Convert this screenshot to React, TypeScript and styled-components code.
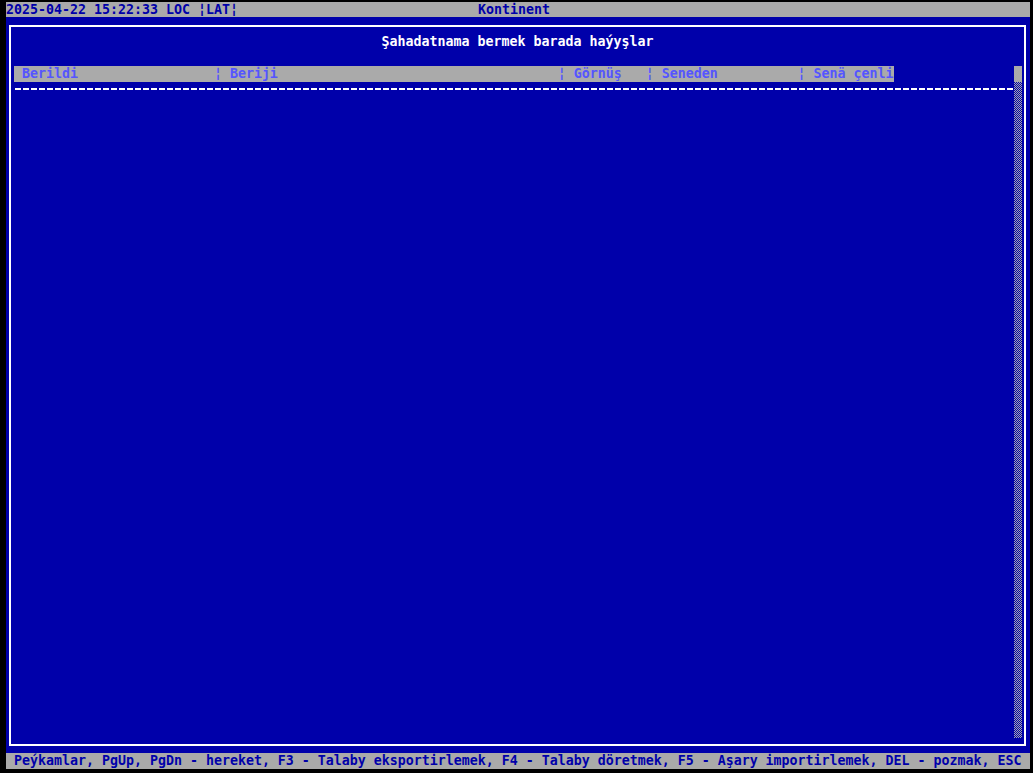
import React from "react";
import styled, { createGlobalStyle } from "styled-components";

const VGA_BLUE = "#0000AA";
const VGA_GRAY = "#AAAAAA";
const VGA_LIGHT_BLUE = "#5555FF";
const WHITE = "#FFFFFF";

const GlobalStyle = createGlobalStyle`
  html, body {
    margin: 0;
    padding: 0;
    background: #000;
    overflow: hidden;
  }
  body {
    font-family: "DejaVu Sans Mono", "Liberation Mono", monospace;
  }
`;

const Screen = styled.div`
  margin: 2px 0 0 6px;
  width: 1024px;
  height: 767px;
  display: flex;
  flex-direction: column;
  font-family: "DejaVu Sans Mono", "Liberation Mono", monospace;
  font-weight: bold;
  font-size: 13.29px;
  line-height: 16px;
  white-space: pre;
`;

const StatusBar = styled.div<{ $height: number }>`
  height: ${(p) => p.$height}px;
  line-height: ${(p) => p.$height}px;
  background: ${VGA_GRAY};
  color: ${VGA_BLUE};
  display: flex;
  align-items: center;
`;

const Clock = styled.span`
  width: 472px;
`;

const AppName = styled.span``;

const HelpText = styled.span`
  padding-left: 8px;
`;

const Desktop = styled.main`
  flex: 1;
  background: ${VGA_BLUE};
  padding: 8px 4px 7px 3px;
  display: flex;
  min-height: 0;
`;

const Frame = styled.section`
  flex: 1;
  border: 2px solid ${WHITE};
  display: flex;
  flex-direction: column;
  min-height: 0;
`;

const Title = styled.h1`
  margin: 7px 0 0;
  height: 16px;
  font: inherit;
  line-height: 16px;
  color: ${WHITE};
  text-align: center;
`;

const Body = styled.div`
  flex: 1;
  margin-top: 16px;
  padding: 0 2px 6px 3px;
  display: flex;
  min-height: 0;
`;

const Table = styled.div`
  flex: 1;
  display: flex;
  flex-direction: column;
`;

const HeaderRow = styled.div`
  width: 880px;
  height: 16px;
  background: ${VGA_GRAY};
  color: ${VGA_LIGHT_BLUE};
  overflow: hidden;
`;

const DashRow = styled.div`
  height: 16px;
  display: flex;
  flex-direction: column;
`;

const DashLine = styled.div`
  margin-top: 6px;
  height: 2px;
  width: 1000px;
  background: repeating-linear-gradient(
    90deg,
    transparent 0 1px,
    ${WHITE} 1px 7px,
    transparent 7px 8px
  );
`;

const ScrollBar = styled.div`
  width: 8px;
  display: flex;
  flex-direction: column;
`;

const Thumb = styled.div`
  height: 16px;
  background: ${VGA_GRAY};
`;

const Track = styled.div`
  flex: 1;
  background: repeating-conic-gradient(${VGA_GRAY} 0 25%, ${VGA_BLUE} 0 50%) 0 0 / 2px 2px;
`;

const pad = (s: string, n: number) => s + " ".repeat(Math.max(0, n - s.length));

const columns: { label: string; width: number }[] = [
  { label: "Berildi", width: 24 },
  { label: "Beriji", width: 41 },
  { label: "Görnüş", width: 9 },
  { label: "Seneden", width: 17 },
  { label: "Senä çenli", width: 10 },
];

const headerText =
  " " +
  columns
    .map((c, i) => (i === 0 ? pad(c.label, c.width) : "¦ " + pad(c.label, c.width)))
    .join("");

export default function App() {
  return (
    <>
      <GlobalStyle />
      <Screen>
        <StatusBar $height={15}>
          <Clock>2025-04-22 15:22:33 LOC ¦LAT¦</Clock>
          <AppName>Kontinent</AppName>
        </StatusBar>
        <Desktop>
          <Frame>
            <Title>Şahadatnama bermek barada haýyşlar</Title>
            <Body>
              <Table>
                <HeaderRow>{headerText}</HeaderRow>
                <DashRow>
                  <DashLine />
                </DashRow>
              </Table>
              <ScrollBar>
                <Thumb />
                <Track />
              </ScrollBar>
            </Body>
          </Frame>
        </Desktop>
        <StatusBar $height={16}>
          <HelpText>
            Peýkamlar, PgUp, PgDn - hereket, F3 - Talaby eksportirlemek, F4 - Talaby döretmek, F5 - Aşary importirlemek, DEL - pozmak, ESC
          </HelpText>
        </StatusBar>
      </Screen>
    </>
  );
}
